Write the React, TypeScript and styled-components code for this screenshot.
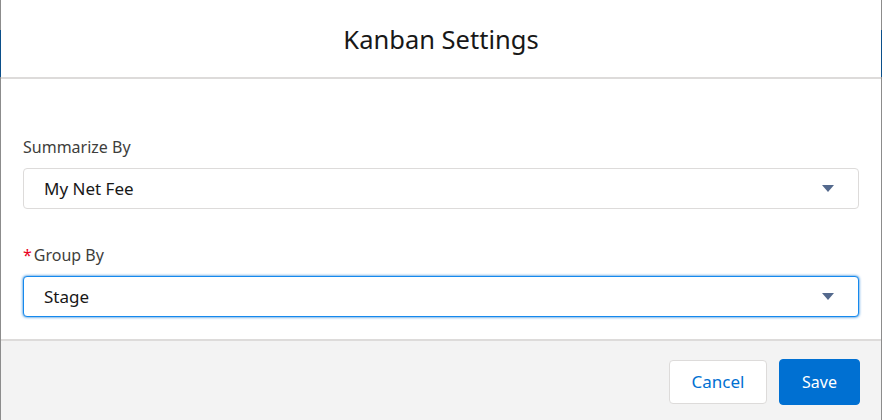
import React from "react";
import styled, { createGlobalStyle } from "styled-components";

const GlobalStyle = createGlobalStyle`
  html, body {
    margin: 0;
    padding: 0;
    background: #ffffff;
  }
  * {
    box-sizing: border-box;
  }
`;

const Backdrop = styled.div`
  display: flex;
  height: 420px;
  width: 882px;
  padding: 0 1px;
  background: linear-gradient(
    to bottom,
    #8c8c8c 0,
    #8c8c8c 30px,
    #0b4f8a 30px,
    #0b4f8a 77px,
    #8c8c8c 77px
  );
  font-family: "Noto Sans", "Open Sans", sans-serif;
`;

const Modal = styled.section`
  flex: 1;
  display: flex;
  flex-direction: column;
  background-color: #ffffff;
`;

const Header = styled.header`
  height: 79px;
  display: flex;
  align-items: center;
  justify-content: center;
  border-bottom: 2px solid #dddbda;

  h2 {
    margin: 0;
    font-size: 25.5px;
    font-weight: 400;
    color: #181818;
  }
`;

const Body = styled.div`
  flex: 1;
  padding: 58px 22px 0 22px;
  display: flex;
  flex-direction: column;
  gap: 36px;
`;

const Field = styled.div`
  display: flex;
  flex-direction: column;
  gap: 11px;
`;

const Label = styled.label`
  height: 20px;
  line-height: 20px;
  font-size: 16px;
  color: #3e3e3c;

  abbr {
    color: #ea001e;
    text-decoration: none;
    margin-right: 2px;
    font-size: 16px;
  }
`;

const Select = styled.div<{ focused?: boolean }>`
  height: 41px;
  display: flex;
  align-items: center;
  justify-content: space-between;
  padding: 0 24px 0 20px;
  border-radius: 4px;
  border: 1px solid ${props => (props.focused ? "#1589ee" : "#dddbda")};
  box-shadow: ${props => (props.focused ? "0 0 3px #0070d2" : "none")};
  background-color: #ffffff;

  span {
    font-size: 17px;
    color: #181818;
  }
`;

const Footer = styled.footer`
  height: 81px;
  display: flex;
  align-items: center;
  justify-content: flex-end;
  gap: 12px;
  padding: 2px 21px 0 21px;
  border-top: 2px solid #dddbda;
  background-color: #f3f3f3;
`;

const Button = styled.button<{ primary?: boolean }>`
  height: ${props => (props.primary ? "46px" : "44px")};
  width: ${props => (props.primary ? "81px" : "98px")};
  border-radius: 4px;
  border: 1px solid ${props => (props.primary ? "#0070d2" : "#dddbda")};
  background-color: ${props => (props.primary ? "#0070d2" : "#ffffff")};
  color: ${props => (props.primary ? "#ffffff" : "#0070d2")};
  font-family: "Noto Sans", "Open Sans", sans-serif;
  font-size: ${props => (props.primary ? "16px" : "17px")};
  cursor: pointer;
`;

const Caret = () => (
  <svg width="12" height="7" viewBox="0 0 12 7">
    <polygon points="0,0 12,0 6,7" fill="#54698d" />
  </svg>
);

export default function App() {
  return (
    <>
      <GlobalStyle />
      <Backdrop>
        <Modal>
          <Header>
            <h2>Kanban Settings</h2>
          </Header>
          <Body>
            <Field>
              <Label>Summarize By</Label>
              <Select>
                <span>My Net Fee</span>
                <Caret />
              </Select>
            </Field>
            <Field>
              <Label>
                <abbr title="required">*</abbr>Group By
              </Label>
              <Select focused>
                <span>Stage</span>
                <Caret />
              </Select>
            </Field>
          </Body>
          <Footer>
            <Button>Cancel</Button>
            <Button primary>Save</Button>
          </Footer>
        </Modal>
      </Backdrop>
    </>
  );
}
